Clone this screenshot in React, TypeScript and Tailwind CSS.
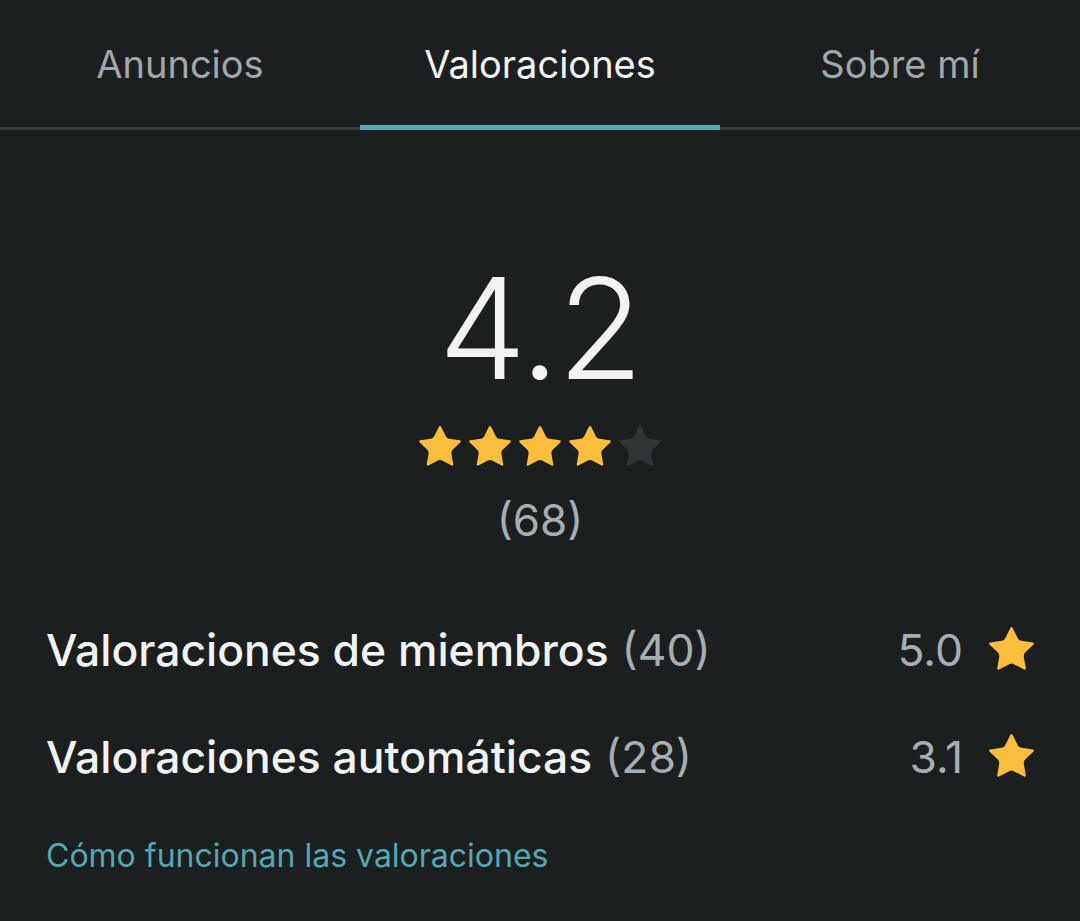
import React from "react";

const STAR =
  "M11.525 2.295a.53.53 0 0 1 .95 0l2.31 4.679a2.123 2.123 0 0 0 1.595 1.16l5.166.756a.53.53 0 0 1 .294.904l-3.736 3.638a2.123 2.123 0 0 0-.611 1.878l.882 5.14a.53.53 0 0 1-.771.56l-4.618-2.428a2.122 2.122 0 0 0-1.973 0L6.396 21.01a.53.53 0 0 1-.77-.56l.881-5.139a2.122 2.122 0 0 0-.611-1.879L2.16 9.795a.53.53 0 0 1 .294-.906l5.165-.755a2.122 2.122 0 0 0 1.597-1.16z";

function Star({ filled = true, className }: { filled?: boolean; className: string }) {
  return (
    <svg viewBox="2.1 2 19.8 19.2" className={className}>
      <path d={STAR} fill={filled ? "#fbbd3d" : "#2f3537"} />
    </svg>
  );
}

const tabs = ["Anuncios", "Valoraciones", "Sobre mí"];

export default function App() {
  return (
    <div
      className="min-h-[921px] w-[1080px] bg-[#1b1f20] text-[#f2f3f3]"
      style={{ fontFamily: "Inter, 'Noto Sans', sans-serif" }}
    >
      <nav className="flex h-[130px] border-b-[3px] border-[#363b3d]">
        {tabs.map((t, i) => (
          <div
            key={t}
            className={`relative flex flex-1 items-center justify-center pt-[2px] text-[38px] ${
              i === 1 ? "text-[#f4f5f5]" : "text-[#a2a7a9]"
            }`}
          >
            {t}
            {i === 1 && <span className="absolute -bottom-[3px] left-0 right-0 h-[5px] bg-[#5aa9b4]" />}
          </div>
        ))}
      </nav>

      <section className="flex flex-col items-center pt-[128px]">
        <div className="text-[140px] font-light leading-none tracking-[-2px] text-[#f1f2f2]">4.2</div>
        <div className="mt-[28px] flex gap-[8px]">
          {[0, 1, 2, 3, 4].map((i) => (
            <Star key={i} filled={i < 4} className="h-[40px] w-[42px]" />
          ))}
        </div>
        <div className="mt-[32px] text-[44px] leading-none text-[#a7aeb0]">(68)</div>
      </section>

      <section className="mt-[86px] flex flex-col gap-[63px] px-[46px]">
        <RatingRow label="Valoraciones de miembros" count={40} score="5.0" />
        <RatingRow label="Valoraciones automáticas" count={28} score="3.1" />
      </section>

      <a className="mt-[60px] block px-[46px] text-[32px] leading-none text-[#55a7b1]">
        Cómo funcionan las valoraciones
      </a>
    </div>
  );
}

function RatingRow({ label, count, score }: { label: string; count: number; score: string }) {
  return (
    <div className="flex items-center justify-between text-[44.4px] leading-none">
      <div>
        <span className="font-medium text-[#f2f3f3]">{label}</span>
        <span className="ml-[13px] text-[#a7aeb0]">({count})</span>
      </div>
      <div className="flex items-center gap-[26px]">
        <span className="text-[#a7aeb0]">{score}</span>
        <Star className="-mt-[4px] h-[43px] w-[45px]" />
      </div>
    </div>
  );
}
